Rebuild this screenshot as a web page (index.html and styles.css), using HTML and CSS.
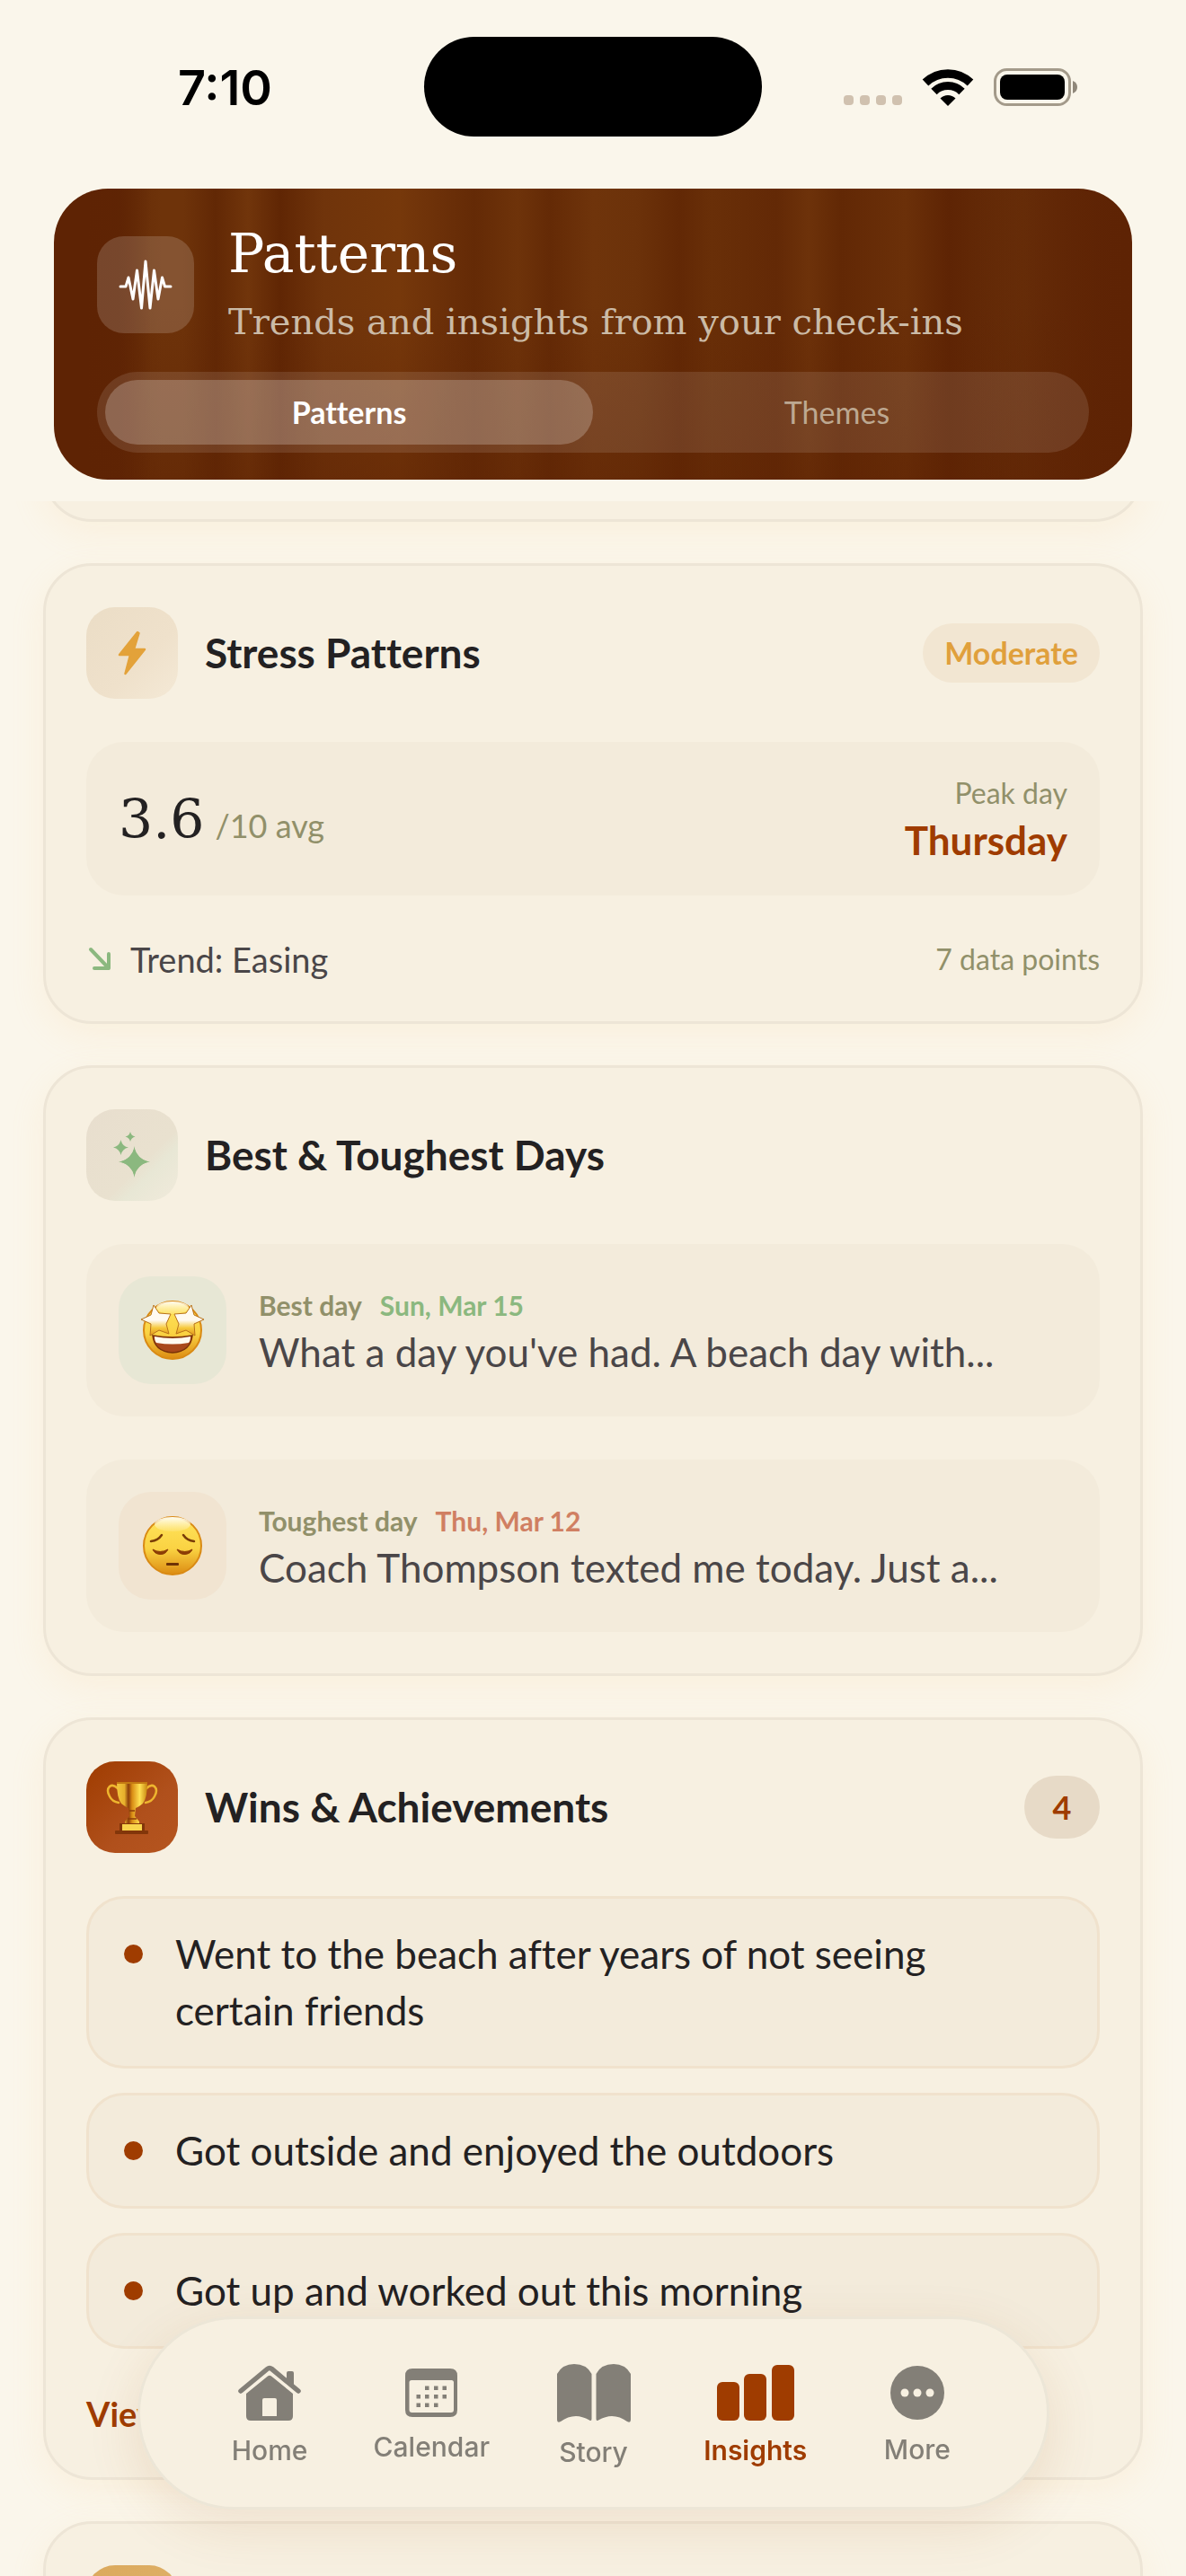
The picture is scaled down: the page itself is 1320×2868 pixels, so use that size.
FILE: index.html
```html
<!DOCTYPE html>
<html lang="en">
<head>
    <meta charset="utf-8">
    <meta name="viewport" content="width=device-width, initial-scale=1">
    <title>Patterns</title>
    <link rel="stylesheet" href="styles.css">
</head>
<body>
    <div class="screen">
        <div class="status-bar">
            <div class="status-time">7:10</div>
            <div class="island"></div>
            <div class="status-icons">
                <span class="signal"><i></i><i></i><i></i><i></i></span>
                <svg width="58" height="44" viewBox="0 0 58 44">
                    <path d="M4 17A36 36 0 0 1 54 17" fill="none" stroke="#000" stroke-width="9.5"/>
                    <path d="M13.5 27A22 22 0 0 1 44.5 27" fill="none" stroke="#000" stroke-width="9"/>
                    <path d="M29 43L20.5 34.5A12 12 0 0 1 37.5 34.5Z"/>
                </svg>
                <svg width="94" height="44" viewBox="0 0 94 44">
                    <rect x="1.5" y="2.5" width="83" height="39" rx="13" fill="none" stroke="#a39a8a" stroke-width="3"/>
                    <rect x="7" y="8" width="72" height="28" rx="8"/>
                    <path d="M88 15q5 2 5 7t-5 7z" fill="#8f877a"/>
                </svg>
            </div>
        </div>

        <header class="hero">
            <div class="hero-top">
                <div class="hero-icon">
                    <svg width="60" height="56" viewBox="-1 -1 60 56">
                        <path d="M1 29H7L10 19L15 43L19.5 11L24.5 53L29 1L34 53L38.5 11L43 43L47.5 19L50.5 29H57" fill="none" stroke="#fff" stroke-width="3" stroke-linejoin="round" stroke-linecap="round"/>
                    </svg>
                </div>
                <div>
                    <h1>Patterns</h1>
                    <p>Trends and insights from your check-ins</p>
                </div>
            </div>
            <div class="tabs">
                <button class="tab active">Patterns</button>
                <button class="tab">Themes</button>
            </div>
        </header>

        <main class="feed">
            <div class="card card-prev"></div>

            <section class="card">
                <div class="card-head">
                    <div class="tile tile-amber">
                        <svg width="32" height="50" viewBox="0 0 32 50">
                            <path d="M22 2L2 27H14L8.5 48L30 21H18L23.5 3Z" fill="#e3a23a" stroke="#e3a23a" stroke-width="2.5" stroke-linejoin="round"/>
                        </svg>
                    </div>
                    <h2>Stress Patterns</h2>
                    <span class="pill">Moderate</span>
                </div>
                <div class="panel stress">
                    <div class="score"><span class="score-num">3.6</span><span class="score-unit">/10 avg</span></div>
                    <div class="peak">
                        <span class="peak-label">Peak day</span>
                        <span class="peak-value">Thursday</span>
                    </div>
                </div>
                <div class="trend">
                    <svg width="30" height="30" viewBox="0 0 30 30">
                        <path d="M5 4L25 25M25 9V25H9" fill="none" stroke="#8bb87f" stroke-width="4" stroke-linecap="round" stroke-linejoin="round"/>
                    </svg>
                    <span class="trend-text">Trend: Easing</span>
                    <span class="trend-count">7 data points</span>
                </div>
            </section>

            <section class="card">
                <div class="card-head">
                    <div class="tile tile-green">
                        <svg width="42" height="52" viewBox="0 0 42 52" fill="#8bb87f">
                            <path d="M23.5 16Q25 31 41 33.5Q25 36 23.5 51Q22 36 6 33.5Q22 31 23.5 16Z"/>
                            <path d="M23.5 18Q27 30 39 33.5Q27 37 23.5 49Q20 37 8 33.5Q20 30 23.5 18Z"/>
                            <path d="M8.5 9Q10 16.5 17 17.5Q10 19 8.5 26Q7 19 0 17.5Q7 16 8.5 9Z"/>
                            <path d="M19 0Q20 4.5 24.5 5.5Q20 6.5 19 11Q18 6.5 13.5 5.5Q18 4.5 19 0Z"/>
                        </svg>
                    </div>
                    <h2>Best &amp; Toughest Days</h2>
                </div>
                <div class="panel day">
                    <div class="mood mood-best">
                        <!-- star eyes -->
                        <svg width="74" height="68" viewBox="0 0 74 68">
                            <defs>
                                <linearGradient id="face" x1="0" y1="0" x2="0" y2="1">
                                    <stop offset="0" stop-color="#ffe45c"/>
                                    <stop offset=".55" stop-color="#fad343"/>
                                    <stop offset="1" stop-color="#dc8b12"/>
                                </linearGradient>
                                <linearGradient id="shine" x1="0" y1="0" x2="0" y2="1">
                                    <stop offset="0" stop-color="#fffdf4"/>
                                    <stop offset="1" stop-color="#fff3c0" stop-opacity=".2"/>
                                </linearGradient>
                                <linearGradient id="star" x1="0" y1="0" x2="0" y2="1">
                                    <stop offset=".5" stop-color="#fffaf0"/>
                                    <stop offset=".75" stop-color="#f6c93c"/>
                                    <stop offset="1" stop-color="#e0951c"/>
                                </linearGradient>
                            </defs>
                            <circle cx="37" cy="34" r="32" fill="url(#face)" stroke="#d98a14" stroke-width="2"/>
                            <ellipse cx="37" cy="9" rx="18" ry="7" fill="url(#shine)"/>
                            <path d="M16 6L22 15L35 16L30 27L33 38L22 34L12 40L13 27L2 22L13 17Z" fill="url(#star)" stroke="#b9721a" stroke-linejoin="round"/>
                            <path d="M58 6L52 15L39 16L44 27L41 38L52 34L62 40L61 27L72 22L61 17Z" fill="url(#star)" stroke="#b9721a" stroke-linejoin="round"/>
                            <path d="M15 40Q37 44 59 40Q57 58 37 59Q17 58 15 40Z" fill="#a9481a" stroke="#7a3208" stroke-width="1.5"/>
                            <path d="M17 41Q37 45 57 41Q57 46 55 48Q37 51 19 48Q17 46 17 41Z" fill="#fffaf0"/>
                        </svg>
                    </div>
                    <div class="day-text">
                        <div class="day-meta">Best day <span class="date-best">Sun, Mar 15</span></div>
                        <div class="day-note">What a day you've had. A beach day with...</div>
                    </div>
                </div>
                <div class="panel day">
                    <div class="mood mood-tough">
                        <!-- pensive face -->
                        <svg width="74" height="68" viewBox="0 0 74 68">
                            <circle cx="37" cy="34" r="32" fill="url(#face)" stroke="#d98a14" stroke-width="2"/>
                            <ellipse cx="37" cy="10" rx="20" ry="8" fill="url(#shine)"/>
                            <g fill="none" stroke="#7a3d08" stroke-width="2.5" stroke-linecap="round">
                                <path d="M13 29Q21 28 25 22"/>
                                <path d="M61 29Q53 28 49 22"/>
                            </g>
                            <path d="M15 38Q23 43 32 38Q29 44 23 43.5Q17 43 15 38Z" fill="#8c3d06" stroke="#8c3d06"/>
                            <path d="M42 38Q51 43 59 38Q57 43 51 43.5Q45 44 42 38Z" fill="#8c3d06" stroke="#8c3d06"/>
                            <rect x="30" y="53" width="14" height="3" rx="1" fill="#6e3206"/>
                        </svg>
                    </div>
                    <div class="day-text">
                        <div class="day-meta">Toughest day <span class="date-tough">Thu, Mar 12</span></div>
                        <div class="day-note">Coach Thompson texted me today. Just a...</div>
                    </div>
                </div>
            </section>

            <section class="card">
                <div class="card-head">
                    <div class="tile tile-rust">
                        <svg width="60" height="60" viewBox="0 0 60 60">
                            <defs>
                                <linearGradient id="gold" x1="0" y1="0" x2="1" y2="0">
                                    <stop offset="0" stop-color="#f3c63e"/>
                                    <stop offset=".25" stop-color="#e7b02c"/>
                                    <stop offset=".38" stop-color="#8c3d0a"/>
                                    <stop offset=".5" stop-color="#d98c14"/>
                                    <stop offset=".75" stop-color="#ffe052"/>
                                    <stop offset="1" stop-color="#c8860f"/>
                                </linearGradient>
                            </defs>
                            <path d="M14 9Q9 4 5 7Q1 11 5 18Q8 24 15 25M46 9Q51 4 55 7Q59 11 55 18Q52 24 45 25" fill="none" stroke="#eeb52e" stroke-width="2.5" stroke-linecap="round"/>
                            <path d="M13 2H47Q47 20 42 26Q37 30 34 31L33 40L38 46V49H22V46L27 40L26 31Q23 30 18 26Q13 20 13 2Z" fill="url(#gold)"/>
                            <path d="M13 2H47V4H13Z" fill="#c47a12"/>
                            <path d="M27 34H33M25 43H35" stroke="#8c3d0a" stroke-width="1.5"/>
                            <rect x="16" y="48" width="28" height="10" fill="#82360a"/>
                            <rect x="19" y="49" width="22" height="8" fill="#f8d44b"/>
                            <rect x="11" y="56" width="37" height="4" rx="1" fill="#82360a"/>
                        </svg>
                    </div>
                    <h2>Wins &amp; Achievements</h2>
                    <span class="count">4</span>
                </div>
                <ul class="wins">
                    <li>Went to the beach after years of not seeing certain friends</li>
                    <li>Got outside and enjoyed the outdoors</li>
                    <li>Got up and worked out this morning</li>
                </ul>
                <a class="view-all" href="#wins">View all</a>
            </section>

            <section class="card">
                <div class="card-head">
                    <div class="tile tile-gold"></div>
                </div>
            </section>
        </main>

        <nav class="tab-bar">
            <a href="#home">
                <svg width="70" height="62" viewBox="0 0 70 62">
                    <path d="M3 29L32.5 4.5Q35 2.5 37.5 4.5L67 29" fill="none" stroke="currentColor" stroke-width="5.5" stroke-linecap="round"/>
                    <path d="M54 18V9Q54 7 56 7H60Q62 7 62 9V24Z" fill="currentColor"/>
                    <path fill-rule="evenodd" d="M9 32L33 12.5Q35 11 37 12.5L61 32V57Q61 62 56 62H14Q9 62 9 57ZM29 37Q27 37 27 39V57H43V39Q43 37 41 37Z" fill="currentColor"/>
                </svg>
                <span>Home</span>
            </a>
            <a href="#calendar">
                <svg width="58" height="54" viewBox="0 0 58 54" fill="currentColor">
                    <path fill-rule="evenodd" d="M8 0H50Q58 0 58 8V46Q58 54 50 54H8Q0 54 0 46V8Q0 0 8 0ZM7 13Q4.5 13 4.5 15.5V46Q4.5 49 7.5 49H51Q54 49 54 46V15.5Q54 13 51.5 13Z"/>
                    <path d="M22 19.5h4.5v4.5h-4.5zM32 19.5h4.5v4.5h-4.5zM41.5 19.5h4.5v4.5h-4.5zM12.5 29h4.5v4.5h-4.5zM22 29h4.5v4.5h-4.5zM32 29h4.5v4.5h-4.5zM41.5 29h4.5v4.5h-4.5zM12.5 38.5h4.5v4.5h-4.5zM22 38.5h4.5v4.5h-4.5zM32 38.5h4.5v4.5h-4.5z"/>
                </svg>
                <span>Calendar</span>
            </a>
            <a href="#story">
                <svg width="82" height="65" viewBox="0 0 82 65" fill="currentColor">
                    <path d="M0 11Q6 0 19 0Q33 0 38.5 11V61Q38.5 64 36 62.5Q28 58 21 58Q12 58 4 64Q0 66 0 62Z"/>
                    <path d="M82 11Q76 0 63 0Q49 0 43.5 11V61Q43.5 64 46 62.5Q54 58 61 58Q70 58 78 64Q82 66 82 62Z"/>
                </svg>
                <span>Story</span>
            </a>
            <a href="#insights" class="current">
                <svg width="86" height="62" viewBox="0 0 86 62" fill="currentColor">
                    <rect y="19" width="25" height="43" rx="6"/>
                    <rect x="30" y="10" width="25" height="52" rx="6"/>
                    <rect x="61" width="25" height="62" rx="6"/>
                </svg>
                <span>Insights</span>
            </a>
            <a href="#more">
                <svg width="60" height="60" viewBox="0 0 60 60">
                    <circle cx="30" cy="30" r="30" fill="currentColor"/>
                    <g fill="#f7f0e1"><circle cx="16" cy="30" r="4.5"/><circle cx="30" cy="30" r="4.5"/><circle cx="44" cy="30" r="4.5"/></g>
                </svg>
                <span>More</span>
            </a>
        </nav>
    </div>
</body>
</html>
```
FILE: styles.css
```css
* {
    box-sizing: border-box;
}
body {
    margin: 0;
    background: #faf6eb;
    color: #232122;
    font-family: Lato, "Open Sans", sans-serif;
    font-variant-ligatures: none;
}
h1, h2, p, ul {
    margin: 0;
    padding: 0;
}
svg {
    display: block;
    flex: none;
}
.screen {
    height: 100vh;
    display: flex;
    flex-direction: column;
    overflow: hidden;
}

/* status bar */
.status-bar {
    flex: none;
    height: 210px;
    padding: 41px 120px 0;
    display: grid;
    grid-template-columns: 1fr 376px 1fr;
    align-items: start;
}
.status-time {
    padding-left: 78px;
    font: 600 54px/114px Inter, sans-serif;
    color: #000;
}
.island {
    height: 111px;
    border-radius: 56px;
    background: #000;
}
.status-icons {
    height: 111px;
    display: flex;
    align-items: center;
    justify-content: flex-end;
    gap: 22px;
}
.signal {
    display: flex;
    gap: 7px;
    padding-top: 30px;
}
.signal i {
    width: 11px;
    height: 11px;
    border-radius: 4px;
    background: #d0c1af;
}

/* header */
.hero {
    flex: none;
    margin: 0 60px 24px;
    padding: 30px 48px;
    border-radius: 60px;
    background:
        linear-gradient(90deg, #5e2304 3%, transparent 10%, transparent 85%, #5e2304 100%),
        linear-gradient(180deg, transparent 40%, rgba(94, 35, 4, 0.5) 100%),
        linear-gradient(90deg, #5f2504 6%, #6e330a 9%, #6e330a 12%, #622805 15%, #71350b 18%, #602604 21%, #70340b 25%, #76380b 32%, #692e08 37%, #642a06 39%, #6e330a 43%, #642a06 46%, #6f340b 50%, #6c320a 54%, #622805 58%, #692f08 61%, #632906 67%, #6d320a 70%, #622805 73%, #6b3009 79%, #5e2404 83%, #69300a 90%, #5e2404 100%);
}
.hero-top {
    display: flex;
    align-items: center;
    gap: 38px;
    margin-bottom: 21px;
}
.hero-icon {
    width: 108px;
    height: 108px;
    border-radius: 30px;
    background: rgba(255, 255, 255, 0.16);
    display: flex;
    align-items: center;
    justify-content: center;
}
.hero h1 {
    font: 400 60px/84px "DejaVu Serif", serif;
    color: #fff;
}
.hero p {
    font: 400 40px/69px "DejaVu Serif", serif;
    color: #cbbba7;
}
.tabs {
    display: flex;
    padding: 9px;
    border-radius: 45px;
    background: rgba(255, 255, 255, 0.11);
}
.tab {
    flex: 1;
    height: 72px;
    padding: 0;
    border: none;
    border-radius: 36px;
    background: transparent;
    color: #bda891;
    font: 400 34px/72px Lato, sans-serif;
    font-variant-ligatures: none;
}
.tab.active {
    background: rgba(255, 255, 255, 0.22);
    color: #fff;
    font-weight: 700;
}

/* feed */
.feed {
    flex: 1;
    min-height: 0;
    overflow: hidden;
    padding: 0 48px;
    display: flex;
    flex-direction: column;
    gap: 46px;
}
.card {
    flex: none;
    padding: 46px 45px;
    border: 3px solid #ede5d6;
    border-radius: 54px;
    background: #f7f0e1;
    box-shadow: 0 12px 36px rgba(255, 210, 150, 0.16);
    display: flex;
    flex-direction: column;
    gap: 48px;
}
.card-prev {
    height: 160px;
    margin-top: -137px;
}
.card-head {
    display: flex;
    align-items: center;
    gap: 30px;
}
.card-head h2 {
    flex: 1;
    font-size: 46px;
    line-height: 60px;
    font-weight: 700;
}
.tile {
    width: 102px;
    height: 102px;
    border-radius: 32px;
    display: flex;
    align-items: center;
    justify-content: center;
}
.tile-amber {
    background: linear-gradient(135deg, #ebddc6, #efe1cb 60%, #f4e9d6);
}
.tile-green {
    background: linear-gradient(135deg, #e8dece, #e9e1cf 60%, #e8e7d5 70%, #f1eadb);
}
.tile-rust {
    background: linear-gradient(135deg, #9f3c00, #b0501c 60%, #b5551f);
}
.tile-gold {
    background: linear-gradient(135deg, #dba95c, #e0b46e);
}
.pill {
    padding: 0 24px;
    border-radius: 33px;
    background: #f2e6d2;
    color: #e0a03c;
    font-size: 34px;
    line-height: 66px;
    font-weight: 700;
}
.count {
    width: 84px;
    border-radius: 35px;
    background: #e7dac7;
    color: #9f3c00;
    font-size: 36px;
    line-height: 70px;
    font-weight: 700;
    text-align: center;
}
.panel {
    padding: 36px;
    border-radius: 42px;
    background: #f3ebdb;
    display: flex;
    align-items: center;
}
.stress {
    justify-content: space-between;
    padding: 33px 36px;
}
.score {
    display: flex;
    align-items: baseline;
    gap: 12px;
}
.score-num {
    font: 400 60px/78px "DejaVu Serif", serif;
}
.score-unit {
    font-size: 36px;
    color: #91906a;
}
.peak {
    display: flex;
    flex-direction: column;
    text-align: right;
}
.peak-label {
    font-size: 32px;
    line-height: 48px;
    color: #91906a;
}
.peak-value {
    font-size: 44px;
    line-height: 57px;
    font-weight: 700;
    color: #9f3c00;
}
.trend {
    display: flex;
    align-items: center;
    gap: 19px;
    line-height: 46px;
}
.trend-text {
    flex: 1;
    font-size: 38px;
    color: #4a4648;
}
.trend-count {
    font-size: 32px;
    color: #91906a;
}
.day {
    gap: 36px;
}
.mood {
    width: 120px;
    height: 120px;
    border-radius: 36px;
    display: flex;
    align-items: center;
    justify-content: center;
}
.mood-best {
    background: #e7e7d5;
}
.mood-tough {
    background: #f1e4d1;
}
.day-meta {
    display: flex;
    gap: 20px;
    font-size: 30px;
    line-height: 48px;
    font-weight: 700;
    color: #91906a;
}
.date-best {
    color: #8bb87f;
}
.date-tough {
    color: #d07f62;
}
.day-note {
    font-size: 44px;
    line-height: 57px;
    color: #4a4648;
}
.wins {
    display: flex;
    flex-direction: column;
    gap: 27px;
    list-style: none;
}
.wins li {
    display: flex;
    gap: 36px;
    padding: 30px 60px 30px 39px;
    border: 3px solid #f0e2cd;
    border-radius: 42px;
    background: #f3ebdb;
    font-size: 44px;
    line-height: 63px;
}
.wins li::before {
    content: "";
    flex: none;
    width: 21px;
    height: 21px;
    margin-top: 21px;
    border-radius: 50%;
    background: #9f3c00;
}
.view-all {
    align-self: flex-start;
    font-size: 38px;
    line-height: 49px;
    font-weight: 700;
    color: #9f3c00;
    text-decoration: none;
}

/* floating bottom navigation */
.tab-bar {
    position: fixed;
    left: 153px;
    right: 152px;
    bottom: 74px;
    height: 215px;
    padding: 6px 54px 0;
    border: 3px solid #ece6d7;
    border-radius: 108px;
    background: #f7f0e1;
    box-shadow: 0 18px 60px rgba(159, 80, 20, 0.12);
    display: flex;
    align-items: center;
}
.tab-bar a {
    flex: 1;
    display: flex;
    flex-direction: column;
    align-items: center;
    gap: 15px;
    color: #837f77;
    font: 500 30px/36px Inter, sans-serif;
    text-decoration: none;
}
.tab-bar a.current {
    color: #9f3c00;
    font-weight: 600;
}
```
